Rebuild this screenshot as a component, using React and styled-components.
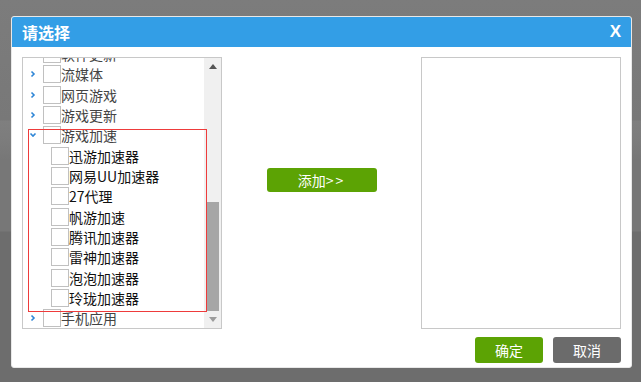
import React from "react";
import styled, { createGlobalStyle } from "styled-components";

const GlobalStyle = createGlobalStyle`
  html, body {
    margin: 0;
    padding: 0;
  }
  body {
    font-family: "Noto Sans CJK SC", "Microsoft YaHei", sans-serif;
    font-size: 14px;
  }
`;

const Page = styled.div`
  width: 641px;
  height: 382px;
  box-sizing: border-box;
  padding: 16px 9px 0 11px;
  overflow: hidden;
  background: linear-gradient(
    to bottom,
    #7c7c7c 0,
    #787878 120px,
    #7f7f7f 121px,
    #7c7c7c 142px,
    #777777 160px,
    #777777 231px,
    #6d6d6d 232px
  );
`;

const Dialog = styled.div`
  width: 621px;
  height: 352px;
  box-sizing: border-box;
  border: 1px solid #e8e8e8;
  border-radius: 3px;
  background: #fff;
  display: flex;
  flex-direction: column;
  overflow: hidden;
`;

const Header = styled.div`
  height: 30px;
  flex: none;
  background: #339ee6;
  display: flex;
  align-items: center;
  justify-content: space-between;
  padding: 0 10px 0 10px;
  color: #fff;
`;

const Title = styled.span`
  font-size: 16px;
  font-weight: bold;
`;

const Close = styled.span`
  font-family: "Liberation Sans", Arial, sans-serif;
  font-size: 17px;
  font-weight: bold;
  cursor: pointer;
`;

const Body = styled.div`
  display: flex;
  padding: 10px 10px 0 10px;
`;

const Panel = styled.div`
  position: relative;
  width: 200px;
  height: 272px;
  box-sizing: border-box;
  border: 1px solid #c8c8c8;
  display: flex;
  background: #fff;
`;

const Middle = styled.div`
  width: 199px;
  display: flex;
  justify-content: center;
  align-items: flex-start;
  padding-top: 111px;
`;

const Button = styled.button`
  border: none;
  border-radius: 3px;
  color: #fff;
  font-family: "Noto Sans CJK SC", "Microsoft YaHei", sans-serif;
  font-size: 14px;
  padding: 0;
  cursor: pointer;
  width: ${(p) => p.$w}px;
  height: ${(p) => p.$h}px;
  background: ${(p) => (p.$gray ? "#6b6b6b" : "#5ca304")};
`;

const Wide = styled.span`
  letter-spacing: 2px;
`;

const Viewport = styled.div`
  flex: 1;
  overflow: hidden;
`;

const List = styled.div`
  margin-top: -14px;
`;

const Row = styled.div`
  height: 20.33px;
  display: flex;
  align-items: center;
  color: ${(p) => (p.$child ? "#111" : "#444")};
  white-space: nowrap;
`;

const Toggle = styled.span`
  width: ${(p) => p.$w}px;
  flex: none;
  display: flex;
  align-items: center;
  justify-content: center;
`;

const Box = styled.span`
  width: 18px;
  height: 18px;
  box-sizing: border-box;
  border: 1px solid #c0c0c0;
  background: #fff;
  flex: none;
`;

const Label = styled.span`
  line-height: 20px;
`;

const Scrollbar = styled.div`
  width: 17px;
  flex: none;
  background: #f0f0f0;
  display: flex;
  flex-direction: column;
`;

const Arrow = styled.div`
  height: 17px;
  flex: none;
  display: flex;
  align-items: center;
  justify-content: center;
`;

const Track = styled.div`
  flex: 1;
  display: flex;
  flex-direction: column;
`;

const Thumb = styled.div`
  margin: 127px 2px 0 2px;
  flex: 1;
  background: #a6a6a6;
`;

const Highlight = styled.div`
  position: absolute;
  left: 5px;
  top: 71px;
  width: 179px;
  height: 183px;
  box-sizing: border-box;
  border: 1px solid #ee3b3b;
  pointer-events: none;
`;

const Footer = styled.div`
  display: flex;
  justify-content: flex-end;
  gap: 10px;
  padding: 8px 10px 0 0;
`;

const Chevron = ({ open }) => (
  <svg width="8" height="8" viewBox="0 0 8 8">
    <path
      d={open ? "M1.5 2.5 L4 5 L6.5 2.5" : "M2.5 1.5 L5 4 L2.5 6.5"}
      fill="none"
      stroke="#2f86d6"
      strokeWidth="1.6"
    />
  </svg>
);

const Tri = ({ up, color }) => (
  <svg width="8" height="5" viewBox="0 0 8 5">
    <path d={up ? "M0 5 L4 0 L8 5 Z" : "M0 0 L8 0 L4 5 Z"} fill={color} />
  </svg>
);

const tree = [
  { name: "软件更新" },
  { name: "流媒体" },
  { name: "网页游戏" },
  { name: "游戏更新" },
  {
    name: "游戏加速",
    open: true,
    children: [
      "迅游加速器",
      "网易UU加速器",
      "27代理",
      "帆游加速",
      "腾讯加速器",
      "雷神加速器",
      "泡泡加速器",
      "玲珑加速器",
    ],
  },
  { name: "手机应用" },
];

const TreeRows = () =>
  tree.map((node) => (
    <React.Fragment key={node.name}>
      <Row>
        <Toggle $w={20}>
          <Chevron open={node.open} />
        </Toggle>
        <Box />
        <Label>{node.name}</Label>
      </Row>
      {node.open &&
        node.children.map((c) => (
          <Row key={c} $child>
            <Toggle $w={28} />
            <Box />
            <Label>{c}</Label>
          </Row>
        ))}
    </React.Fragment>
  ));

export default function App() {
  return (
    <>
      <GlobalStyle />
      <Page>
        <Dialog>
          <Header>
            <Title>请选择</Title>
            <Close>X</Close>
          </Header>
          <Body>
            <Panel>
              <Viewport>
                <List>
                  <TreeRows />
                </List>
              </Viewport>
              <Scrollbar>
                <Arrow>
                  <Tri up color="#555" />
                </Arrow>
                <Track>
                  <Thumb />
                </Track>
                <Arrow>
                  <Tri color="#9c9c9c" />
                </Arrow>
              </Scrollbar>
              <Highlight />
            </Panel>
            <Middle>
              <Button $w={110} $h={24}>
                添加<Wide>&gt;&gt;</Wide>
              </Button>
            </Middle>
            <Panel />
          </Body>
          <Footer>
            <Button $w={68} $h={26}>
              确定
            </Button>
            <Button $w={68} $h={26} $gray>
              取消
            </Button>
          </Footer>
        </Dialog>
      </Page>
    </>
  );
}
